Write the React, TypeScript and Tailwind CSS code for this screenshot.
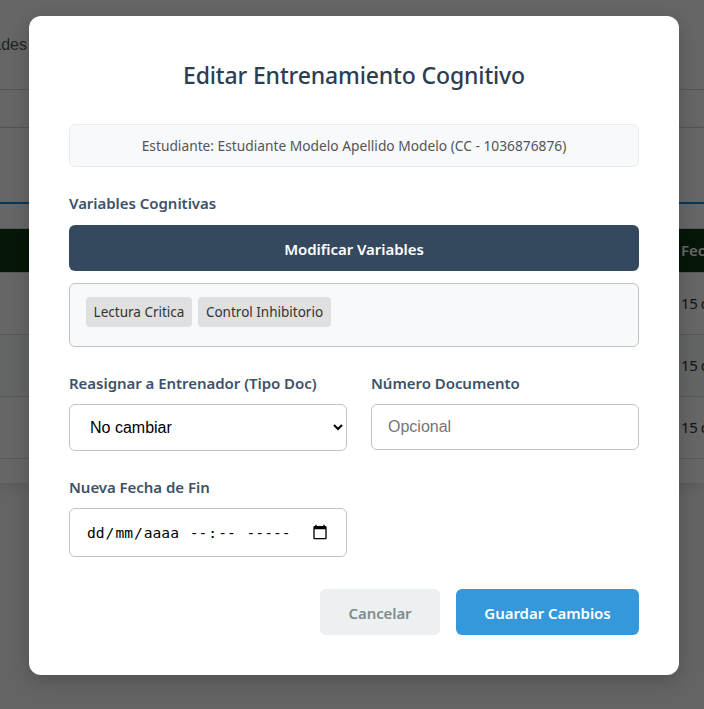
import React from "react";

const ui = "font-['Noto_Sans','Open_Sans',sans-serif]";
const label = "block h-5 whitespace-nowrap text-[15px] leading-5 font-semibold tracking-[-0.04px] text-[#3d5268]";

function BackgroundRow({ tinted = false }: { tinted?: boolean }) {
  return (
    <div
      className={`flex h-[62px] items-center justify-end overflow-hidden border-b border-[#dddddd] pb-0.5 ${
        tinted ? "bg-[#f7fcfa]" : "bg-white"
      }`}
    >
      <span className="w-[23px] whitespace-nowrap text-[15px] leading-5 tracking-[-0.4px] text-[#333333]">
        15 de dic
      </span>
    </div>
  );
}

function BackgroundPage() {
  return (
    <div className={`flex h-[709px] w-[704px] flex-col overflow-hidden bg-[#f9f9f9] ${ui}`}>
      <div className="flex h-[90px] items-center border-b border-[#d4d4d4] bg-white">
        <div className="flex w-[27px] justify-end overflow-hidden">
          <span className="whitespace-nowrap font-['Liberation_Sans',sans-serif] text-[16px] leading-5 text-[#555555]">
            Actividades
          </span>
        </div>
      </div>
      <div className="h-[38px] border-b border-[#d4d4d4] bg-white" />
      <div className="bg-white shadow-[0_4px_12px_rgba(0,0,0,0.1)]">
        <div className="h-[76px] border-b-2 border-[#0d90dc]" />
        <div className="h-[25px] border-b border-[#dddddd]" />
        <div className="flex h-[43px] items-center justify-end overflow-hidden bg-[#0f3815]">
          <span className="w-[23px] whitespace-nowrap text-[15px] font-semibold text-white">Fecha</span>
        </div>
        <div className="border-t border-[#dddddd]">
          <BackgroundRow />
          <BackgroundRow tinted />
          <BackgroundRow />
        </div>
        <div className="h-[24px]" />
      </div>
    </div>
  );
}

function Tag({ children, className }: { children: React.ReactNode; className: string }) {
  return (
    <span className={`flex h-[30px] items-center justify-center whitespace-nowrap rounded-[4px] bg-[#e0e0e0] pt-px text-[13.5px] text-[#333333] ${className}`}>
      {children}
    </span>
  );
}

function DateField() {
  return (
    <div className="flex h-[49px] w-[278px] items-center rounded-[6px] border border-[#bdc3c7] bg-white pl-4 pr-[18px] font-['DejaVu_Sans_Mono',monospace] text-[14.62px] text-black">
      <span className="px-px">dd</span>
      <span>/</span>
      <span className="px-px">mm</span>
      <span>/</span>
      <span className="px-px">aaaa</span>
      <span className="whitespace-pre"> </span>
      <span className="px-px">--</span>
      <span>:</span>
      <span className="px-px">--</span>
      <span className="whitespace-pre"> </span>
      <span className="px-px">-----</span>
      <svg className="mb-px ml-auto" width="16" height="16" viewBox="0 0 24 24" fill="black">
        <path d="M20 3h-1V1h-2v2H7V1H5v2H4c-1.1 0-2 .9-2 2v16c0 1.1.9 2 2 2h16c1.100 0 2-.9 2-2V5c0-1.100-.9-2-2-2zm0 18H4V8h16v13z" />
      </svg>
    </div>
  );
}

export default function App() {
  return (
    <div className="relative h-[709px] w-[704px] overflow-hidden">
      <BackgroundPage />
      <div className={`absolute inset-0 flex items-start bg-black/60 pl-[29px] pt-4 ${ui}`}>
        <div className="flex h-[659px] w-[650px] flex-col rounded-[12px] bg-white px-10 shadow-[0_5px_20px_rgba(0,0,0,0.2)]">
          <h2 className="mt-[43px] whitespace-nowrap text-center text-[23px] leading-8 font-medium tracking-[-0.14px] text-[#2c3e50]">
            Editar Entrenamiento Cognitivo
          </h2>
          <div className="mt-[33px] flex h-[43px] items-center justify-center whitespace-nowrap rounded-[6px] border border-[#e9ecef] bg-[#f8f9fa] pt-0.5 text-[13.75px] text-[#555555]">
            Estudiante: Estudiante Modelo Apellido Modelo (CC - 1036876876)
          </div>
          <span className={`mt-[26px] ${label}`}>Variables Cognitivas</span>
          <button className="mt-3 flex h-[46px] items-center justify-center rounded-[6px] bg-[#34495e] pt-0.5 text-[15px] font-semibold tracking-[-0.05px] text-white">
            Modificar Variables
          </button>
          <div className="mt-3 flex h-16 gap-1.5 rounded-[6px] border border-[#bdc3c7] bg-[#f8f9fa] px-4 pt-[13px]">
            <Tag className="w-[106px]">Lectura Critica</Tag>
            <Tag className="w-[133px]">Control Inhibitorio</Tag>
          </div>
          <div className="mt-[26px] flex gap-6">
            <div className="w-[278px]">
              <label className={label}>Reasignar a Entrenador (Tipo Doc)</label>
              <select className="mt-[11px] block h-[47px] w-full rounded-[6px] border border-[#bdc3c7] bg-white px-4 font-['Liberation_Sans',sans-serif] text-[16px] text-black">
                <option>No cambiar</option>
              </select>
            </div>
            <div className="w-[268px]">
              <label className={label}>Número Documento</label>
              <input
                placeholder="Opcional"
                className="mt-[11px] block h-[46px] w-full rounded-[6px] border border-[#bdc3c7] bg-white px-4 font-['Liberation_Sans',sans-serif] text-[16px] placeholder:text-[#757575]"
              />
            </div>
          </div>
          <span className={`mt-[26px] ${label}`}>Nueva Fecha de Fin</span>
          <div className="mt-[11px]">
            <DateField />
          </div>
          <div className="mt-8 flex justify-end gap-4 text-[15px] font-semibold">
            <button className="h-[46px] w-[120px] rounded-[6px] bg-[#ecf0f1] pt-0.5 tracking-[-0.1px] text-[#7f8c8d]">Cancelar</button>
            <button className="h-[46px] w-[183px] whitespace-nowrap rounded-[6px] bg-[#3498db] pt-0.5 tracking-[-0.05px] text-white">Guardar Cambios</button>
          </div>
        </div>
      </div>
    </div>
  );
}
